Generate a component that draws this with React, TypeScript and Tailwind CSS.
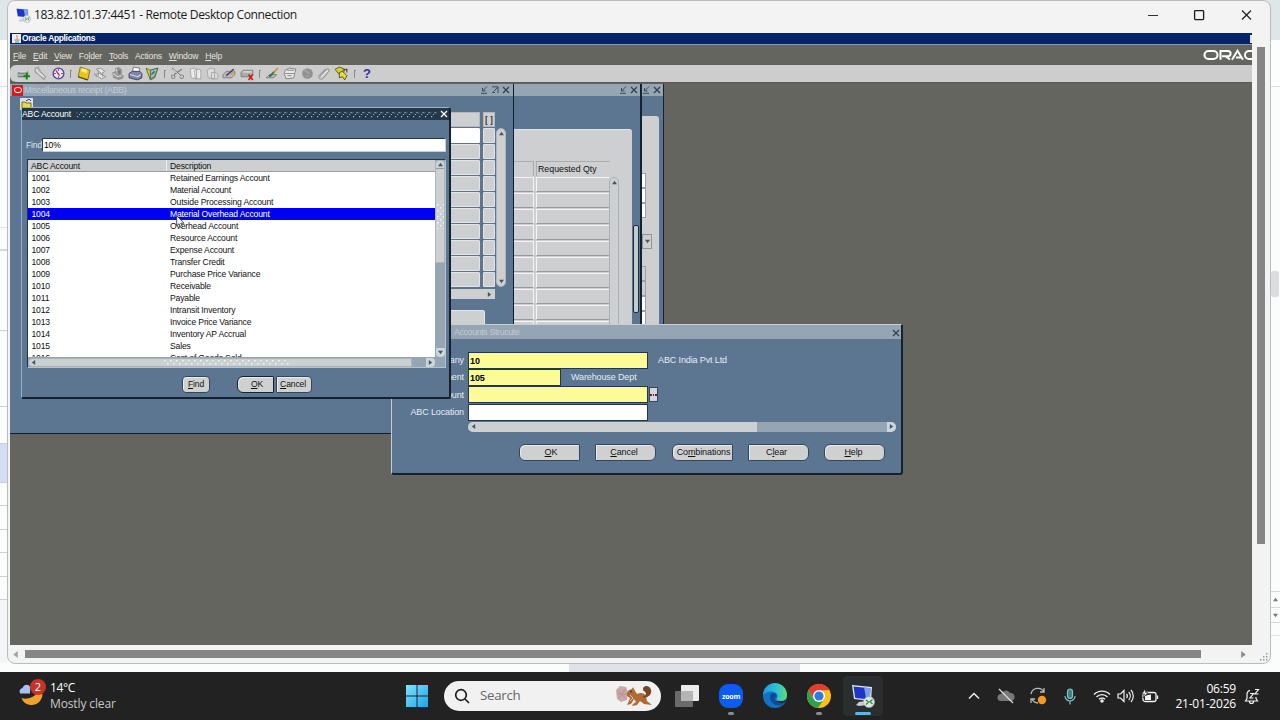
import React from "react";

const accounts: [string, string][] = [
  ["1001", "Retained Earnings Account"],
  ["1002", "Material Account"],
  ["1003", "Outside Processing Account"],
  ["1004", "Material Overhead Account"],
  ["1005", "Overhead Account"],
  ["1006", "Resource Account"],
  ["1007", "Expense Account"],
  ["1008", "Transfer Credit"],
  ["1009", "Purchase Price Variance"],
  ["1010", "Receivable"],
  ["1011", "Payable"],
  ["1012", "Intransit Inventory"],
  ["1013", "Invoice Price Variance"],
  ["1014", "Inventory AP Accrual"],
  ["1015", "Sales"],
  ["1016", "Cost of Goods Sold"],
];

const S = ({ children, size = 15 }: { children: React.ReactNode; size?: number }) => (
  <svg width={size} height={size} viewBox="0 0 14 14" fill="none" className="shrink-0">
    {children}
  </svg>
);

const toolbarGroups: React.ReactNode[][] = [
  [
    <S><path d="M1 7l2-2h8l1 1v4H1z" fill="#a9aca9" /><path d="M2 6.500h7l2-1M2 10h6" stroke="#5e6361" /><path d="M3 5.500h7" stroke="#eee" /><path d="M10 6.500v6M7 9.500h6" stroke="#0a8a12" strokeWidth="1.900" /></S>,
    <S><path d="M2 2l3-1 2 4 5 5-2 3-5-5-3-2z" fill="#b9b9b9" stroke="#8d8d8d" strokeWidth=".7" /><path d="M3 3l2 3 5 4" stroke="#eee" /></S>,
    <S><circle cx="7" cy="7" r="5" fill="#e9e6f5" stroke="#5a4a9a" strokeWidth="1.300" /><path d="M4.500 4l3.500 5" stroke="#c02848" strokeWidth="1.200" /><path d="M7 3v1.500M7 9.500V11M3 7h1.500M9.500 7H11" stroke="#4b3d8e" /></S>,
  ],
  [
    <S><path d="M4 1l9 3-2 9-9-3z" fill="#e9c51e" stroke="#7b6a12" strokeWidth=".8" /><path d="M5.500 2l5 1.600-.6 3-5-1.600z" fill="#fff08a" /><path d="M2 10l9 3" stroke="#4c420c" /></S>,
    <S><path d="M3 3l4-1 4 3-3 2zM2 8l4-1 6 3-4 2z" fill="#e6e6e6" stroke="#8b8b8b" strokeWidth=".8" /><path d="M5 4v5M9 6v4M1 7l3 3" stroke="#999" /></S>,
    <S><path d="M2 6l3-1V2l3-1 3 2v5l2 1-1 3-4 1-5-2z" fill="#949494" /><path d="M3 7l4 3 4-1M6 3l1 4" stroke="#d6d6d6" /><circle cx="8.500" cy="5.500" r="1.500" fill="#777" /></S>,
    <S><path d="M5 1l6 1-1 5H4z" fill="#fff" stroke="#667" strokeWidth=".8" /><path d="M1 7l3-2h7l2 2v4l-4 2-8-2z" fill="#8085a8" stroke="#34385b" strokeWidth=".8" /><path d="M2 8l7 2 3-2" stroke="#dadcf0" /></S>,
    <S><path d="M1 2l4 2 7-2-3 9-4 2z" fill="#d3d53a" stroke="#5b6323" strokeWidth=".8" /><path d="M5 4l7-2-3 8-4 2z" fill="#a8bac2" stroke="#465c60" strokeWidth=".8" /><path d="M6 8l3-3" stroke="#158a24" strokeWidth="1.400" /></S>,
  ],
  [
    <S><path d="M2 2l8 7M11 3L4 8" stroke="#777" strokeWidth="1.100" /><circle cx="3" cy="10" r="1.600" stroke="#888" /><circle cx="11" cy="10" r="1.600" stroke="#888" /><path d="M3 3l7 7" stroke="#eee" strokeWidth=".6" /></S>,
    <S><path d="M2 3l4-1 2 1v9l-5-1zM6 4l4-1 2 1v8H7z" fill="#ececec" stroke="#a0a0a0" strokeWidth=".8" /></S>,
    <S><path d="M2 4l3-2 4 1v9l-6-1zM6 6h4l2 2v4H6z" fill="#dedede" stroke="#a0a0a0" strokeWidth=".8" /></S>,
    <S><path d="M1 8l3-3h8v3l-3 3H1z" fill="#b9bbb9" stroke="#777" strokeWidth=".8" /><path d="M4 9l7-6" stroke="#4a3f9a" strokeWidth="1.500" /><path d="M8 8l3-3" stroke="#e09c28" strokeWidth="1.500" /></S>,
    <S><path d="M1 6l2-2h9v4l-2 2H1z" fill="#abadab" stroke="#777" strokeWidth=".8" /><path d="M3 5.500h8" stroke="#eee" /><path d="M8 8l4 5M12 8l-4 5" stroke="#d81818" strokeWidth="1.600" /></S>,
  ],
  [
    <S><path d="M1 11l3-3h7l-3 3z" fill="#b4b8b5" stroke="#666" strokeWidth=".6" /><path d="M4 10l5-5" stroke="#2a7a48" strokeWidth="1.800" /><path d="M8 6l4-4" stroke="#d8902a" strokeWidth="1.600" /></S>,
    <S><path d="M3 4l4-2 6 1-1 3-1 5-7 1-2-5z" fill="#e9e9e9" stroke="#777" strokeWidth=".8" /><path d="M3 7h8M5 4h6M5 9h4" stroke="#888" strokeWidth=".9" /></S>,
    <S><circle cx="7" cy="7" r="5" fill="#919191" /><path d="M4 4c3 0 2 3 5 3M5 10l3-1" stroke="#a9a9a9" strokeWidth="1.300" /></S>,
    <S><path d="M3 10l6-7c2-1 3 1 2 2l-6 7c-2 1-4-1-3-3l6-6" stroke="#999" /><path d="M4 10l6-6" stroke="#eee" /></S>,
    <S><path d="M1 3l4-2 5 2-1 3-5 1z" fill="#d9cf30" stroke="#55511a" strokeWidth=".8" /><path d="M5 6l3-1 4 4-2 4-2-3-3 1z" fill="#e7dc39" stroke="#4b471a" strokeWidth=".8" /><path d="M8 4l4-1v3" stroke="#444" /></S>,
  ],
];

const u = (a: string, b: string, c: string) => (
  <span>{a}<span className="underline underline-offset-1">{b}</span>{c}</span>
);

const Tri = ({ d, c = "#4b555c", size = 5 }: { d: "u" | "d" | "l" | "r"; c?: string; size?: number }) => (
  <svg width={size} height={size} viewBox="0 0 6 6" className="shrink-0">
    <path d={{ u: "M0 5h6L3 1z", d: "M0 1h6L3 5z", l: "M5 0v6L1 3z", r: "M1 0v6L5 3z" }[d]} fill={c} />
  </svg>
);

const TitleIcons = ({ max }: { max?: boolean }) => (
  <div className="flex items-center gap-[3px]">
    <svg width="8" height="8" viewBox="0 0 8 8" fill="none" stroke="#3f4a52"><path d="M7 .5L3 4.500M2.500 2v3h3M1 7.300h6" /></svg>
    {max && <svg width="8" height="8" viewBox="0 0 8 8" fill="none" stroke="#3f4a52"><path d="M1 .8h6v6M7 1L2.500 5.500M1 6.500h3" /></svg>}
    <XIcon c="#34404a" />
  </div>
);

const XIcon = ({ c }: { c: string }) => (
  <svg width="8" height="8" viewBox="0 0 8 8" fill="none" stroke={c} strokeWidth="1.300"><path d="M1 1l6 6M7 1L1 7" /></svg>
);

function Btn({ children, cls }: { children: React.ReactNode; cls: string }) {
  return (
    <div className={`flex h-[17px] items-center justify-center border border-[#34465a] bg-[#cfd1d1] pt-[1px] text-[#111] shadow-[inset_1px_1px_0_#e8ecec] ${cls}`}>
      {children}
    </div>
  );
}

function MiscReceipt() {
  return (
    <div className="absolute left-0 top-[1px] flex h-[350px] w-[504px] flex-col border-b border-r border-[#0f1d2c] bg-[#5c7591]">
      <div className="flex h-[12px] shrink-0 items-center bg-[#95a5b3] pr-[3px]">
        <div className="ml-[2px] flex h-[11px] w-[11px] items-center justify-center bg-[#e8121c]">
          <div className="h-[6px] w-[8px] rounded-full border-[1.500px] border-white" />
        </div>
        <span className="ml-[1px] flex-1 pt-[1px] text-[8.800px] tracking-[-0.300px] text-[#c3ccd3]">Miscellaneous receipt (ABB)</span>
        <TitleIcons max />
      </div>
      <div className="flex pl-[10px] pt-[2px]">
        <div className="h-[12px] w-[13px] bg-[#dfe1e1] pl-[1px]">
          <svg width="11" height="11" viewBox="0 0 11 11" fill="none"><path d="M1 4h3l1 1h5v5H1z" fill="#ecd84a" stroke="#55511a" strokeWidth=".8" /><path d="M5 3l3-2 2 2" stroke="#2b3aa0" /></svg>
        </div>
      </div>
      <div className="mt-[2px] flex flex-col pl-[400px]">
        <div className="flex h-[15px] gap-[3px]">
          <div className="w-[70px] border border-[#b3b9bd] bg-[#cdcfd0]" />
          <div className="flex w-[12px] items-center justify-center border border-[#b3b9bd] bg-[#cdcfd0] pt-[2px] text-[9.500px] text-black">[ ]</div>
        </div>
        <div className="mt-[1px] flex">
          <div className="flex flex-col gap-[1px]">
            {accounts.slice(0, 10).map(([id], i) => (
              <div key={id} className="flex h-[15px] gap-[3px]">
                <div className={`w-[70px] rounded-[1px] border ${i === 0 ? "border-white bg-white" : "border-[#e2e6ea] bg-[#cdcfd0]"}`} />
                <div className="w-[12px] rounded-[1px] border border-[#e2e6ea] bg-[#cdcfd0]" />
              </div>
            ))}
          </div>
          <div className="ml-[1px] flex h-[159px] w-[10px] flex-col items-center justify-between rounded-[5px] border border-[#aab6c0] bg-[#cdcfd0] py-[2px]">
            <Tri d="u" /><Tri d="d" />
          </div>
        </div>
        <div className="mt-[2px] flex h-[10px] w-[85px] items-center justify-end bg-[#cdcfd0] pr-[3px]"><Tri d="r" /></div>
        <div className="mt-[11px] h-[18px] w-[75px] rounded-[2px] border border-[#e2e6ea] bg-[#cdcfd0]" />
      </div>
    </div>
  );
}

function RequestWindow() {
  return (
    <div className="absolute left-[504px] top-[1px] flex h-[350px] w-[128px] flex-col border-b border-r-2 border-[#14222f] bg-[#5c7591]">
      <div className="flex h-[12px] shrink-0 items-center justify-end bg-[#95a5b3] pr-[2px]"><TitleIcons /></div>
      <div className="mt-[33px] flex min-h-0 flex-1">
        <div className="flex w-[118px] flex-col rounded-tr-[3px] border-t border-[#dfe3e6] bg-[#cdcfd0]">
          <div className="mt-[31px] flex h-[15px] gap-[2px]">
            <div className="w-[20px] border-r border-t border-[#a8adb0]" />
            <div className="flex w-[74px] items-center border-l border-t border-[#a8adb0] pl-[1px] pt-[1px] text-[8.800px] text-[#111]">Requested Qty</div>
          </div>
          <div className="mt-[1px] flex">
            <div className="flex w-[95px] flex-col gap-[1px]">
              {accounts.slice(0, 11).map(([id]) => (
                <div key={id} className="flex h-[15px] gap-[2px]">
                  <div className="w-[20px] border-y border-r border-b-[#8e9aa5] border-r-[#f4f5f5] border-t-[#f4f5f5]" />
                  <div className="w-[73px] border-y border-l border-b-[#8e9aa5] border-l-[#f4f5f5] border-t-[#f4f5f5]" />
                </div>
              ))}
            </div>
            <div className="flex h-[176px] w-[10px] flex-col items-center rounded-t-[5px] border border-[#a4b0ba] pt-[2px]"><Tri d="u" /></div>
          </div>
        </div>
        <div className="ml-[1px] mt-[96px] h-[88px] w-[6px] rounded-[2px] border border-[#1a2c3e] bg-[#c3cbd1]" />
      </div>
    </div>
  );
}

function EdgeWindow() {
  return (
    <div className="absolute left-[632px] top-[1px] flex h-[350px] w-[22px] flex-col border-b border-r border-[#14222f] bg-[#5c7591]">
      <div className="flex h-[12px] shrink-0 items-center bg-[#95a5b3]"><TitleIcons /></div>
      <div className="mt-[20px] flex w-[17px] flex-1 flex-col rounded-tr-[3px] bg-[#cdcfd0] pt-[57px]">
        {[0, 1, 2].map((i) => <div key={i} className="h-[15px] w-[4px] border border-l-0 border-[#9aa2a8] bg-white" />)}
        <div className="mt-[16px] flex h-[15px] w-[10px] items-center justify-center border border-[#8b959c]"><Tri d="d" /></div>
        {[0, 1].map((i) => <div key={i} className={`${i === 0 ? "mt-[17px]" : ""} h-[15px] w-[4px] border border-l-0 border-[#9aa2a8]`} />)}
        {[0, 1, 2].map((i) => <div key={i} className="h-[15px] w-[4px] border border-l-0 border-[#9aa2a8] bg-white" />)}
      </div>
    </div>
  );
}

function StructureDialog() {
  const row = "flex h-[17.300px] items-center";
  const label = "w-[72px] pr-[4px] pt-[1px] text-right text-[#e6edf4]";
  const value = "ml-[10px] pt-[1px] text-[#e6edf4]";
  const box = "h-[17px] border border-[#22364a]";
  return (
    <div className="absolute left-[381px] top-[241px] flex h-[151px] w-[512px] flex-col rounded-b-[3px] rounded-tr-[2px] border border-b-2 border-r-2 border-[#c3ced8] border-b-[#14222f] border-r-[#14222f] bg-[#5c7591] text-[9px] tracking-[-0.120px]">
      <div className="flex h-[14px] shrink-0 items-center justify-between bg-[#95a5b3] pl-[62px] pr-[1px] pt-[1px] text-[8.800px] text-[#c3ccd3]">
        <span className="tracking-[-0.350px]">Accounts Strucute</span><XIcon c="#34404a" />
      </div>
      <div className="mt-[12.600px] flex flex-col pl-[4px]">
        <div className={row}><span className={label}>Company</span><div className={`${box} w-[180px] bg-[#fdfb98] pl-[1px] font-bold leading-[16px] text-black`}>10</div><span className={value}>ABC India Pvt Ltd</span></div>
        <div className={row}><span className={label}>Department</span><div className={`${box} w-[93px] bg-[#fdfb98] pl-[1px] font-bold leading-[16px] text-black`}>105</div><span className={value}>Warehouse Dept</span></div>
        <div className={row}><span className={label}>ABC Account</span><div className={`${box} w-[180px] bg-[#fdfb98]`} />
          <div className="ml-[1px] flex h-[15px] w-[9px] items-center justify-center gap-[1px] border border-[#34465a] bg-[#d8d3e0]">
            <i className="h-[2px] w-[1.500px] bg-[#702020]" /><i className="h-[2px] w-[1.500px] bg-[#702020]" /><i className="h-[2px] w-[1.500px] bg-[#702020]" />
          </div>
        </div>
        <div className={row}><span className={label}>ABC Location</span><div className={`${box} w-[180px] bg-white`} /></div>
      </div>
      <div className="ml-[76px] mt-[1.200px] flex h-[10px] w-[428px] items-center justify-between rounded-[5px] bg-[#95a5b3]">
        <div className="flex h-full w-[289px] items-center rounded-l-[5px] bg-[#cdd0cf] pl-[3px]"><Tri d="l" /></div>
        <div className="flex h-full w-[9px] items-center justify-center rounded-r-[5px] bg-[#cdd6dc]"><Tri d="r" /></div>
      </div>
      <div className="mt-[12px] flex gap-[15px] pl-[127px]">
        <Btn cls="w-[61px] rounded-l-[6px] rounded-r-[1px] pl-[3px]">{u("", "O", "K")}</Btn>
        <Btn cls="w-[61px] rounded-l-[1px] rounded-r-[6px] mr-[1px] pr-[3px]">{u("", "C", "ancel")}</Btn>
        <Btn cls="w-[61px] rounded-l-[6px] rounded-r-[1px] whitespace-nowrap pl-[2px]">{u("Co", "m", "binations")}</Btn>
        <Btn cls="w-[61px] rounded-l-[1px] rounded-r-[6px] pr-[4px]">{u("C", "l", "ear")}</Btn>
        <Btn cls="w-[61px] rounded-[6px] pr-[2px]">{u("", "H", "elp")}</Btn>
      </div>
    </div>
  );
}

function AccountDialog() {
  return (
    <div className="absolute left-[11px] top-[24px] flex h-[292px] w-[430px] flex-col rounded-t-[3px] rounded-b-[2px] border border-b-2 border-r-2 border-[#9fb0be] border-b-[#14222f] border-r-[#14222f] bg-[#5c7591] text-[8.600px] tracking-[-0.160px]">
      <div className="flex h-[12px] shrink-0 items-center bg-[#24384c] pr-[1px] text-white">
        <span className="w-[54px] whitespace-nowrap">ABC Account</span>
        <svg className="mr-[3px] h-[7px] w-[20px] flex-1">
          <defs><pattern id="dots" width="6" height="7" patternUnits="userSpaceOnUse"><path d="M1 5h1.200v1.200h-1.200zM3 3h1v1h-1zM4.500 1h1.200v1.200h-1.200zM0.500 1.500h.8v.8h-.8z" fill="#a3b3c0" /></pattern></defs>
          <rect width="100%" height="7" fill="url(#dots)" />
        </svg>
        <XIcon c="#fff" />
      </div>
      <div className="mt-[18px] flex h-[14px] items-center pl-[4px] pr-[3px]">
        <span className="w-[16px] text-[#dfe8f0]">Find</span>
        <div className="flex h-[14px] flex-1 items-center border border-[#22364a] border-b-[#c3ced8] border-r-[#c3ced8] bg-white pl-[1px] text-black">10%</div>
      </div>
      <div className="ml-[5px] mr-[3px] mt-[7px] flex h-[209px] border border-[#22364a] border-b-[#b5c3cf] border-r-[#b5c3cf] bg-[#95a5b3]">
        <div className="flex min-w-0 flex-1 flex-col">
          <div className="flex h-[12px] shrink-0 items-center border-b border-[#9a9d9f] bg-[#cdcfd0] text-[#111]">
            <span className="h-full w-[139px] border-r border-[#eee] pl-[3px] leading-[13px]">ABC Account</span>
            <span className="h-full pl-[3px] leading-[13px]">Description</span>
          </div>
          <div className="flex h-[185px] flex-col overflow-hidden bg-white">
            {accounts.map(([id, name]) => (
              <div key={id} className={`flex h-[12px] shrink-0 items-center pt-[1px] ${id === "1004" ? "bg-[#0000f4] text-white" : "text-[#111]"}`}>
                <span className="w-[139px] pl-[3.500px]">{id}</span>
                <span className="pl-[3px]">{name}</span>
              </div>
            ))}
          </div>
          <div className="flex h-[10px] items-center justify-between">
            <div className="flex h-[9px] w-[384px] items-center rounded-l-[4px] border border-[#a9b2b8] bg-[#cdd0d1] pl-[2px]">
              <Tri d="l" />
              <svg className="ml-[127px] h-[6px] w-[126px]">
                <defs><pattern id="grip" width="6" height="6" patternUnits="userSpaceOnUse"><path d="M1 1h1.500v1.500h-1.500zM4 4h1.500v1.500h-1.500z" fill="#f4f6f6" /></pattern></defs>
                <rect width="126" height="6" fill="url(#grip)" />
              </svg>
            </div>
            <div className="flex h-[9px] w-[9px] items-center justify-center rounded-r-[4px] bg-[#cdd6dc]"><Tri d="r" /></div>
          </div>
        </div>
        <div className="flex w-[10px] flex-col items-center justify-between pb-[10px]">
          <div className="flex h-[103px] w-full flex-col items-center rounded-t-[4px] border border-[#aeb6bb] bg-[#cdd0d1]">
            <div className="flex h-[8px] w-full items-center justify-center border-b border-[#8f999f]"><Tri d="u" /></div>
            <svg className="mt-[34px] h-[26px] w-[8px]"><rect width="8" height="26" fill="url(#grip)" /></svg>
          </div>
          <div className="flex h-[9px] w-[9px] items-center justify-center rounded-b-[4px] bg-[#cdd6dc]"><Tri d="d" /></div>
        </div>
      </div>
      <div className="mt-[7.500px] flex pl-[160px]">
        <Btn cls="w-[28px] rounded-[4px]">{u("", "F", "ind")}</Btn>
        <Btn cls="ml-[27px] w-[37px] rounded-l-[6px] rounded-r-[1px] border-[1.500px] !border-[#14222f] pl-[3px]">{u("", "O", "K")}</Btn>
        <Btn cls="ml-[2px] w-[36px] rounded-l-[1px] rounded-r-[4px] pr-[2px]">{u("", "C", "ancel")}</Btn>
      </div>
    </div>
  );
}

function RdpIcon({ size }: { size: number }) {
  return (
    <svg width={size} height={size} viewBox="0 0 24 24" fill="none" className="shrink-0">
      <path d="M8 18l6-1 2 4-8 1-3-1z" fill="#c9ced4" />
      <path d="M1 1l20 2-1 14L3 15z" fill="#dfe6f0" />
      <path d="M2.500 2.500l17 1.700-.8 11.300-14.500-1.600z" fill="#1d36c8" />
      <path d="M13 3.600l6.500.6-.8 11.300-3.500-.4z" fill="#7fa0ee" />
      <circle cx="18" cy="18" r="5.500" fill="#dfe8e2" stroke="#a5aaa7" strokeWidth=".6" />
      <path d="M15 16l2.500 2L15 20.500M21.500 15.500L19 17.500l2.500 2.500" stroke="#2c8a48" strokeWidth="1.300" />
    </svg>
  );
}

function Taskbar() {
  return (
    <div className="flex h-[48px] shrink-0 items-center bg-[#222222] font-['Open_Sans','Noto_Sans',sans-serif] text-white">
      <div className="flex w-[405px] items-center pl-[18px]">
        <svg width="30" height="30" viewBox="0 0 30 30" className="mb-[4px] shrink-0">
          <path d="M3.500 19C9 21 16 18 18 15h6.500C24 22 19 26 14 26S5 23.500 3.500 19z" fill="#f2a12b" />
          <path d="M2 14.500c-1-3 0-5 2.500-5.500C6 5 11 5 12 8v6.500z" fill="#a9c1f5" />
          <circle cx="20" cy="8" r="8" fill="#c5342b" />
          <text x="20" y="12" textAnchor="middle" fontSize="11" fill="#fff" fontFamily="Open Sans, sans-serif">2</text>
        </svg>
        <div className="ml-[2px] flex flex-col text-[12px] leading-[16px]">
          <span className="tracking-[-0.400px]">14°C</span><span className="tracking-[-0.120px] text-[#c9c9c9]">Mostly clear</span>
        </div>
      </div>
      <svg width="24" height="24" viewBox="0 0 24 24" className="shrink-0">
        <defs><linearGradient id="win" x1="0" y1="0" x2="1" y2="1"><stop offset="0" stopColor="#7fe3fb" /><stop offset="1" stopColor="#1fa3ea" /></linearGradient></defs>
        <path d="M1 1h10.500v10.500H1zM12.500 1H23v10.500H12.500zM1 12.500h10.500V23H1zM12.500 12.500H23V23H12.500z" fill="url(#win)" />
      </svg>
      <div className="ml-[15px] flex h-[30px] w-[217px] items-center rounded-full bg-[#f1f1f1] pl-[10px] pr-[8px]">
        <svg width="16" height="16" viewBox="0 0 16 16" fill="none" stroke="#1d1d1d" strokeWidth="1.700"><circle cx="7" cy="7" r="5.300" /><path d="M11 11l4 4" /></svg>
        <span className="ml-[10px] flex-1 text-[13.300px] tracking-[-0.300px] text-[#666]">Search</span>
        <svg width="38" height="22" viewBox="0 0 38 22" fill="none">
          <path d="M1 5l4-4 6 1 2 5-1 8-6 2-4-3z" fill="#c9a9a8" />
          <path d="M3 5l7 8M10 4l-6 9M2 9h10" stroke="#b89292" strokeWidth="1" />
          <path d="M12 8l2-3 3-1 1-2 2 4 2 3c4-2 8-1 9 3l1 4 5 4-8-1-4-3-3 4-5 1 1-2 3-2-2-3-3 5-4 1 1-2 2-5-3-2z" fill="#b06a35" />
          <path d="M29 13c5-1 8-4 7-8-1-5-8-5-8-1 0 3 3 2 3 5-1 2-3 2-3 3z" fill="#7a4526" />
          <path d="M15 10l3 3-3 3" stroke="#e8c39a" /><circle cx="16" cy="6.500" r=".8" fill="#222" />
        </svg>
      </div>
      <svg width="25" height="23" viewBox="0 0 25 23" className="ml-[13px] shrink-0">
        <rect x="7" y="0" width="18" height="16" rx="1" fill="#ececec" /><rect x="1" y="6" width="18" height="16" rx="1" fill="#777" fillOpacity=".85" /><path d="M7 6h12v10H7z" fill="#b5b5b5" />
      </svg>
      <div className="ml-[20px] flex h-[40px] w-[24px] flex-col items-center pt-[8px]">
        <div className="flex h-[24px] w-[24px] shrink-0 items-center justify-center rounded-[9px] bg-[#0b5cf5] text-[7px] font-bold leading-none tracking-[-0.200px]">zoom</div>
        <div className="mt-[4px] h-[3px] w-[6px] shrink-0 rounded-full bg-[#8c8c8c]" />
      </div>
      <svg width="26" height="26" viewBox="0 0 26 26" className="ml-[19px] shrink-0">
        <defs><linearGradient id="eg" x1="0" y1="0" x2="1" y2="0"><stop offset="0" stopColor="#1c9be0" /><stop offset=".6" stopColor="#2fc3d2" /><stop offset="1" stopColor="#62d86a" /></linearGradient></defs>
        <circle cx="13" cy="13" r="12" fill="#1372c4" />
        <path d="M1 12A12 12 0 0 1 25 12c0 5-4 6.500-8 6-2-.3-3-1.500-2-3 1.500-2 0-5-3-6-5-1.500-9 1-11 3z" fill="url(#eg)" />
        <path d="M9 11c-2 3-1 9 5 11 3 1 7 0 9-3-3 1.500-7 1-9-1-2-1.800-1-3 .5-4.500 1-2-3-5-5.500-2.500z" fill="#0d4c94" />
        <path d="M14 18c2.500 2 6 2.500 9 1l2-3-3 2z" fill="#222" />
      </svg>
      <div className="ml-[19px] flex h-[40px] w-[24px] flex-col items-center pt-[8px]">
        <svg width="24" height="24" viewBox="0 0 24 24" className="shrink-0">
          <circle cx="12" cy="12" r="12" fill="#fbc116" />
          <path d="M1.600 6A12 12 0 0 1 22.400 6L12 6.500 7 15z" fill="#e33b2e" />
          <path d="M1.600 6A12 12 0 0 0 11 24l6-9-10 .5z" fill="#2da14c" />
          <circle cx="12" cy="12" r="6" fill="#fff" /><circle cx="12" cy="12" r="4.600" fill="#2f78e8" />
        </svg>
        <div className="mt-[4px] h-[3px] w-[6px] shrink-0 rounded-full bg-[#8c8c8c]" />
      </div>
      <div className="ml-[12px] flex h-[40px] w-[40px] flex-col items-center rounded-[4px] bg-[#2b2e2f] pt-[8px]">
        <RdpIcon size={24} />
        <div className="mt-[4px] h-[3px] w-[16px] rounded-full bg-[#55b9e6]" />
      </div>
      <div className="ml-auto flex items-center pr-[20px]">
        <svg width="12" height="8" viewBox="0 0 12 8" fill="none" stroke="#eee" strokeWidth="1.500"><path d="M1 6.500l5-5 5 5" /></svg>
        <svg width="18" height="16" viewBox="0 0 18 16" fill="none" className="ml-[17px]"><path d="M4 13a3.500 3.500 0 0 1 0-7 5 5 0 0 1 9-1 4 4 0 0 1 1 8z" fill="#777" /><path d="M2 1l14 14" stroke="#ddd" strokeWidth="1.200" /></svg>
        <svg width="18" height="18" viewBox="0 0 18 18" fill="none" className="ml-[14px]"><path d="M2 7a7 7 0 0 1 13-2M15 1v4h-4M9 16a7 7 0 0 1-6-4M2 16v-4h4" stroke="#bbb" strokeWidth="1.300" /><circle cx="13" cy="13" r="4.200" fill="#f6991c" /></svg>
        <svg width="12" height="17" viewBox="0 0 12 17" fill="none" className="ml-[17px]" stroke="#7fc4c0" strokeWidth="1.200"><rect x="3.500" y="1" width="5" height="9.500" rx="2.500" fill="#3f7f80" /><path d="M1 8a5 5 0 0 0 10 0M6 13v3.500" /></svg>
        <svg width="18" height="14" viewBox="0 0 18 14" fill="none" className="ml-[17px]" stroke="#f2f2f2" strokeWidth="1.300"><path d="M1 5.500a11 11 0 0 1 16 0M3.500 8a7.500 7.500 0 0 1 11 0M6 10.300a4.200 4.200 0 0 1 6 0" /><circle cx="9" cy="12" r="1.100" fill="#f2f2f2" /></svg>
        <svg width="18" height="14" viewBox="0 0 18 14" fill="none" className="ml-[6px]" stroke="#f2f2f2" strokeWidth="1.200"><path d="M1 5h2.500L7 1.500v11L3.500 9H1zM9.500 5a3 3 0 0 1 0 4M11.700 3a6 6 0 0 1 0 8M14 1a9 9 0 0 1 0 12" /></svg>
        <svg width="18" height="15" viewBox="0 0 18 15" fill="none" className="ml-[6px]"><rect x="2" y="3.500" width="13" height="9" rx="2" stroke="#f2f2f2" strokeWidth="1.300" /><path d="M16.500 6.500v3.500" stroke="#f2f2f2" strokeWidth="1.400" /><path d="M4 11V7l3-1 3-.5v5.500z" fill="#f2f2f2" /><path d="M4 0L1 5h2.500L2 9l5-5.500H4.500z" fill="#fff" stroke="#222" strokeWidth=".6" /></svg>
        <div className="ml-[13px] flex w-[64px] flex-col items-end whitespace-nowrap text-[12px] leading-[15.500px] tracking-[-0.200px]"><span>06:59</span><span>21-01-2026</span></div>
        <svg width="16" height="17" viewBox="0 0 16 17" fill="none" className="ml-[8px]" stroke="#f2f2f2" strokeWidth="1.200"><path d="M6 2.400a4.500 4.500 0 0 0-3 4.600v3.500L1.500 13h12L12 10.500V9M5.500 13.500a2 2 0 0 0 4 0M6 5.500h3.500l-3.500 4.500h3.500M11 1.500h3.500L11 6h3.500" /></svg>
      </div>
    </div>
  );
}

function BrowserBehind() {
  return (
    <div className="absolute inset-0 flex h-[672px] flex-col bg-[#fbfcfc]">
      <div className="h-[40px] bg-[#dfe6e9]" />
      <div className="h-[47px] border-b border-[#dcdfe0] bg-[#fcfdfd]" />
      <div className="flex flex-1 justify-between">
        <div className="flex w-[8px] flex-col">
          <div className="h-[141px] border-b border-[#e3e5e6]" />
          <div className="h-[23px] border-b-2 border-[#d5d8d9]" />
          <div className="h-[79px]" />
          <div className="h-[77px] border-y border-[#cdd0d2]" />
          <div className="h-[37px] border-b border-[#cdd0d2]" />
          <div className="h-[38px] shrink-0 bg-[#d3def5]" />
          <div className="h-[24px] border-y border-[#cdd0d2]" />
          <div className="h-[24px] border-b border-[#cdd0d2]" />
          <div className="h-[23px] border-b border-[#cdd0d2]" />
          <div className="h-[24px] border-b border-[#cdd0d2]" />
          <div className="h-[23px] border-b border-[#cdd0d2]" />
          <div className="flex-1 bg-[#f4f5f6]" />
        </div>
        <div className="flex w-[10px] flex-col items-center pt-[184px]">
          <div className="h-[26px] w-[8px] rounded-[3px] bg-[#dcdddf]" />
          <div className="mt-[294px] flex h-[16px] w-full items-center justify-center border-t border-[#d5d6d8]"><Tri d="u" c="#777" /></div>
          <div className="flex h-[16px] w-full items-center justify-center border-y border-[#d5d6d8]"><Tri d="d" c="#777" /></div>
          <div className="h-[13px] w-full border-b border-[#e3e4e6]" />
        </div>
      </div>
      <div className="flex h-[9px] pl-[569px]"><div className="w-[231px] bg-[#e0e2eb]" /></div>
    </div>
  );
}

export default function App() {
  return (
    <div className="relative flex h-[720px] w-[1280px] flex-col overflow-hidden font-['Liberation_Sans',Arial,sans-serif]">
      <div className="relative flex h-[672px] shrink-0 flex-col pl-[7px]">
        <BrowserBehind />
        <div className="relative flex h-[664px] w-[1264px] flex-col rounded-[8px] border border-[#b9bcbd] bg-[#f3f3f3] pl-[2px]">
          <div className="flex h-[32px] shrink-0 items-center pl-[5px] pr-[18px] font-['Open_Sans','Noto_Sans',sans-serif] text-[#1b1b1b]">
            <div className="pb-[5px]"><RdpIcon size={16} /></div>
            <span className="ml-[3px] flex-1 pb-[3px] text-[12.100px] tracking-[-0.390px]">183.82.101.37:4451 - Remote Desktop Connection</span>
            <svg width="104" height="12" viewBox="0 0 104 12" fill="none" stroke="#1b1b1b" strokeWidth="1.100" className="mb-[5px]">
              <path d="M0 6.500h10" strokeWidth=".9" /><rect x="46.600" y="1.600" width="9" height="9" rx=".8" strokeWidth="1.300" /><path d="M94 1.500l9 9M103 1.500l-9 9" />
            </svg>
          </div>
          <div className="flex h-[612px] shrink-0">
            <div className="flex h-[612px] w-[1242px] flex-col overflow-hidden bg-[#65655f]">
              <div className="flex h-[12px] shrink-0 items-center justify-between border-b border-[#8d95b0] bg-[#06246b] text-white">
                <div className="flex items-center">
                  <div className="ml-[2px] mr-[1px] flex h-[9px] w-[9px] items-center justify-center bg-[#f1eeea]">
                    <svg width="8" height="8" viewBox="0 0 8 8" fill="none"><path d="M4 0c-1 2 1 2 0 4" stroke="#e0782a" /><path d="M1.500 5h5M2 7h4" stroke="#5d7ca0" /></svg>
                  </div>
                  <span className="text-[8.400px] font-bold tracking-[-0.280px]">Oracle Applications</span>
                </div>
                <div className="h-[8px] w-[2px] bg-[#e6e6e6]" />
              </div>
              <div className="flex h-[20px] shrink-0 items-center justify-between pl-[3px] text-[8.600px] text-[#e4e4df]">
                <div className="flex gap-[7px] pt-[2px] tracking-[-0.200px]">
                  {u("", "F", "ile")}{u("", "E", "dit")}{u("", "V", "iew")}{u("Fo", "l", "der")}{u("", "T", "ools")}<span>Actions</span>{u("", "W", "indow")}{u("", "H", "elp")}
                </div>
                <svg width="49" height="12" viewBox="0 0 49 12" fill="none" stroke="#fff" strokeWidth="2" className="mt-[-1px]">
                  <rect x="1.500" y="2" width="13" height="8" rx="4" />
                  <path d="M17.500 10.800V2h7.500a2.500 2.500 0 0 1 0 5.200h-6M22.500 7.200l4.500 3.300" />
                  <path d="M29 10.800l5.500-9 5.500 9M33 8.500h5" />
                  <path d="M50 2h-4a4 4 0 0 0 0 8h4" />
                </svg>
              </div>
              <div className="flex h-[17px] shrink-0 items-center rounded-l-[6px] bg-[#cdcdcd] pl-[4.600px]">
                {toolbarGroups.map((g, i) => (
                  <div key={i} className="flex items-center">
                    {g.map((ic, j) => <div key={j} className="flex w-[17.400px] justify-center">{ic}</div>)}
                    <div className="flex w-[7.700px] justify-center"><div className="h-[8px] w-[2px] border-l border-t border-[#888]" /></div>
                  </div>
                ))}
                <div className="flex w-[17.400px] justify-center font-['Liberation_Sans',sans-serif] text-[13px] font-bold text-[#3b2fa0]">?</div>
              </div>
              <div className="relative flex-1 overflow-hidden border-t border-[#55595a] text-[8.600px]">
                <EdgeWindow />
                <RequestWindow />
                <MiscReceipt />
                <StructureDialog />
                <AccountDialog />
                <svg width="10" height="14" viewBox="0 0 10 14" className="absolute left-[166px] top-[132px]"><path d="M.7.700v10l2.300-2 1.800 4 1.600-.8-1.700-3.700h3.300z" fill="#fff" stroke="#222" strokeWidth=".8" /></svg>
              </div>
            </div>
            <div className="flex flex-1 justify-center pt-[14px]"><div className="mr-[1px] h-[497px] w-[8px] bg-[#858585]" /></div>
          </div>
          <div className="flex h-[18px] items-center pl-[2px]">
            <Tri d="l" c="#a3a3a3" size={7} />
            <div className="ml-[6px] h-[8px] w-[1176px] bg-[#858585]" />
            <div className="ml-[39px]"><Tri d="r" c="#8b8b8b" size={7} /></div>
            <svg width="8" height="8" viewBox="0 0 8 8" className="ml-auto mr-[2px] mt-[5px]"><path d="M6 0h1.500v1.500H6zM3 3h1.500v1.500H3zM6 3h1.500v1.500H6zM0 6h1.500v1.500H0zM3 6h1.500v1.500H3zM6 6h1.500v1.500H6z" fill="#999" /></svg>
          </div>
        </div>
      </div>
      <Taskbar />
    </div>
  );
}
